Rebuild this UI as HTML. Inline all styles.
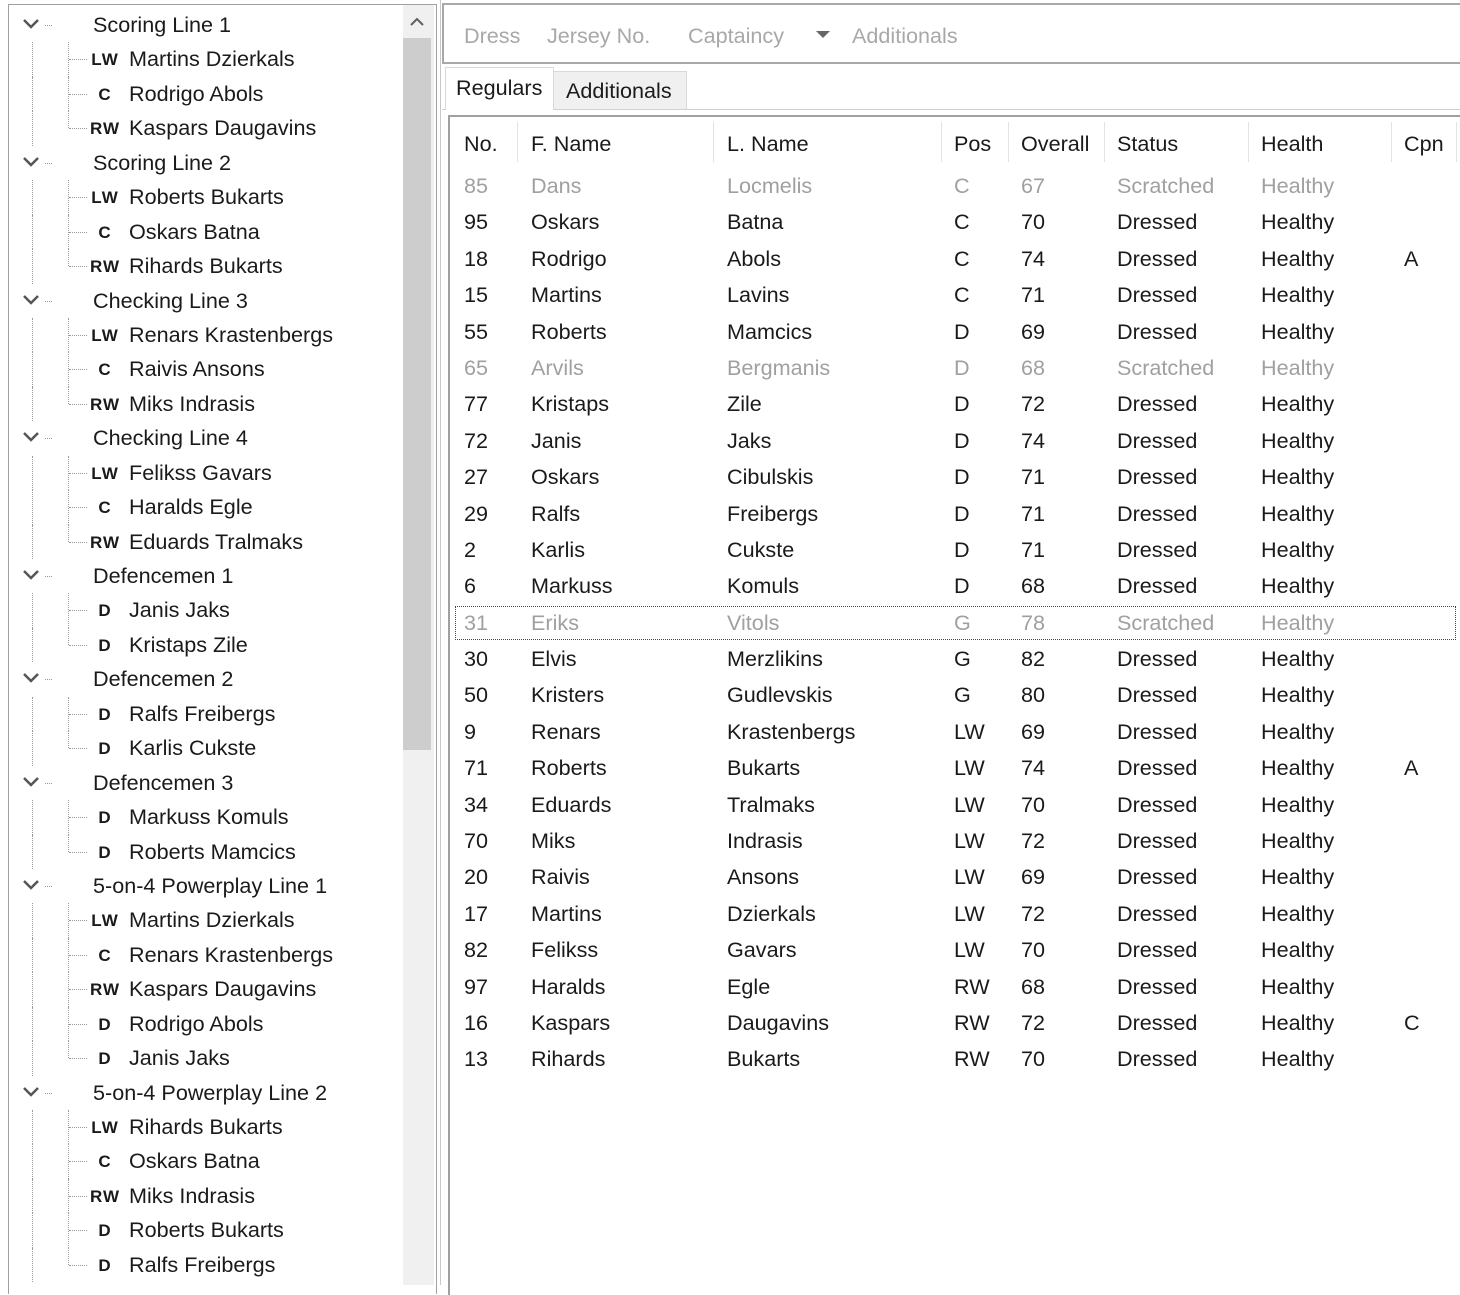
<!DOCTYPE html>
<html><head><meta charset="utf-8"><style>
*{margin:0;padding:0;box-sizing:border-box}
body{width:1460px;height:1285px;background:#fff;position:relative;overflow:hidden;font-family:"Liberation Sans",sans-serif;color:#1a1a1a}
.abs{position:absolute}
#tree{position:absolute;left:8px;top:8px;width:395px}
.r{position:relative;height:34.45px;font-size:21.6px;line-height:34px;white-space:nowrap}
.g .t{position:absolute;left:85px;top:0}
.g svg{position:absolute;left:14px;top:10px}
.g .dd{position:absolute;left:37px;top:17px;width:7px;border-top:1px dotted #999}
.c .vl{position:absolute;left:24px;top:0;height:100%;border-left:1px dotted #999}
.c .v2{position:absolute;left:60px;top:0;height:100%;border-left:1px dotted #999}
.c.last .v2{height:17px}
.c .h{position:absolute;left:61px;top:17px;width:20px;border-top:1px dotted #999}
.c .p{position:absolute;left:79px;width:36px;text-align:center;font-weight:900;font-size:17px;letter-spacing:1px;top:1px;background:#fff}
.c .n{position:absolute;left:121px;top:0}
#tbl{position:absolute;left:450px;top:168px;width:1010px}
.tr{position:relative;height:36.4px;font-size:21.6px;line-height:36px;white-space:nowrap}
.tr span{position:absolute;top:0}
.s{color:#a0a0a0}
.a{left:14px}.b{left:81px}.cc{left:277px}.d{left:504px}.e{left:571px}.f{left:667px}.g2{left:811px}.h2{left:954px}
.sel{outline:1px dotted #444;outline-offset:-2px}
.hd{position:absolute;top:129px;font-size:21.6px;line-height:30px}
.sep{position:absolute;top:122px;height:40px;border-left:1px solid #e3e3e3}
</style></head><body>
<div class="abs" style="left:8px;top:4px;width:429px;height:1290px;border:1px solid #a0a0a0;border-bottom:none"></div>
<div class="abs" style="left:403px;top:5px;width:31px;height:1280px;background:#f0f0f0"></div>
<div class="abs" style="left:403px;top:38px;width:28px;height:712px;background:#cdcdcd"></div>
<svg class="abs" style="left:409px;top:16px" width="16" height="12"><path d="M2 9 L8 3 L14 9" stroke="#606060" stroke-width="2" fill="none"/></svg>
<div class="abs" style="left:440px;top:0;width:1px;height:1285px;background:#c8c8c8"></div>

<div id="tree">
<div class="r g"><svg width="18" height="12"><path d="M2 2 L9 9 L16 2" stroke="#555" stroke-width="2.5" fill="none"/></svg><div class="dd"></div><span class="t">Scoring Line 1</span></div>
<div class="r c"><div class="vl"></div><div class="v2"></div><div class="h"></div><span class="p">LW</span><span class="n">Martins Dzierkals</span></div>
<div class="r c"><div class="vl"></div><div class="v2"></div><div class="h"></div><span class="p">C</span><span class="n">Rodrigo Abols</span></div>
<div class="r c last"><div class="vl"></div><div class="v2"></div><div class="h"></div><span class="p">RW</span><span class="n">Kaspars Daugavins</span></div>
<div class="r g"><svg width="18" height="12"><path d="M2 2 L9 9 L16 2" stroke="#555" stroke-width="2.5" fill="none"/></svg><div class="dd"></div><span class="t">Scoring Line 2</span></div>
<div class="r c"><div class="vl"></div><div class="v2"></div><div class="h"></div><span class="p">LW</span><span class="n">Roberts Bukarts</span></div>
<div class="r c"><div class="vl"></div><div class="v2"></div><div class="h"></div><span class="p">C</span><span class="n">Oskars Batna</span></div>
<div class="r c last"><div class="vl"></div><div class="v2"></div><div class="h"></div><span class="p">RW</span><span class="n">Rihards Bukarts</span></div>
<div class="r g"><svg width="18" height="12"><path d="M2 2 L9 9 L16 2" stroke="#555" stroke-width="2.5" fill="none"/></svg><div class="dd"></div><span class="t">Checking Line 3</span></div>
<div class="r c"><div class="vl"></div><div class="v2"></div><div class="h"></div><span class="p">LW</span><span class="n">Renars Krastenbergs</span></div>
<div class="r c"><div class="vl"></div><div class="v2"></div><div class="h"></div><span class="p">C</span><span class="n">Raivis Ansons</span></div>
<div class="r c last"><div class="vl"></div><div class="v2"></div><div class="h"></div><span class="p">RW</span><span class="n">Miks Indrasis</span></div>
<div class="r g"><svg width="18" height="12"><path d="M2 2 L9 9 L16 2" stroke="#555" stroke-width="2.5" fill="none"/></svg><div class="dd"></div><span class="t">Checking Line 4</span></div>
<div class="r c"><div class="vl"></div><div class="v2"></div><div class="h"></div><span class="p">LW</span><span class="n">Felikss Gavars</span></div>
<div class="r c"><div class="vl"></div><div class="v2"></div><div class="h"></div><span class="p">C</span><span class="n">Haralds Egle</span></div>
<div class="r c last"><div class="vl"></div><div class="v2"></div><div class="h"></div><span class="p">RW</span><span class="n">Eduards Tralmaks</span></div>
<div class="r g"><svg width="18" height="12"><path d="M2 2 L9 9 L16 2" stroke="#555" stroke-width="2.5" fill="none"/></svg><div class="dd"></div><span class="t">Defencemen 1</span></div>
<div class="r c"><div class="vl"></div><div class="v2"></div><div class="h"></div><span class="p">D</span><span class="n">Janis Jaks</span></div>
<div class="r c last"><div class="vl"></div><div class="v2"></div><div class="h"></div><span class="p">D</span><span class="n">Kristaps Zile</span></div>
<div class="r g"><svg width="18" height="12"><path d="M2 2 L9 9 L16 2" stroke="#555" stroke-width="2.5" fill="none"/></svg><div class="dd"></div><span class="t">Defencemen 2</span></div>
<div class="r c"><div class="vl"></div><div class="v2"></div><div class="h"></div><span class="p">D</span><span class="n">Ralfs Freibergs</span></div>
<div class="r c last"><div class="vl"></div><div class="v2"></div><div class="h"></div><span class="p">D</span><span class="n">Karlis Cukste</span></div>
<div class="r g"><svg width="18" height="12"><path d="M2 2 L9 9 L16 2" stroke="#555" stroke-width="2.5" fill="none"/></svg><div class="dd"></div><span class="t">Defencemen 3</span></div>
<div class="r c"><div class="vl"></div><div class="v2"></div><div class="h"></div><span class="p">D</span><span class="n">Markuss Komuls</span></div>
<div class="r c last"><div class="vl"></div><div class="v2"></div><div class="h"></div><span class="p">D</span><span class="n">Roberts Mamcics</span></div>
<div class="r g"><svg width="18" height="12"><path d="M2 2 L9 9 L16 2" stroke="#555" stroke-width="2.5" fill="none"/></svg><div class="dd"></div><span class="t">5-on-4 Powerplay Line 1</span></div>
<div class="r c"><div class="vl"></div><div class="v2"></div><div class="h"></div><span class="p">LW</span><span class="n">Martins Dzierkals</span></div>
<div class="r c"><div class="vl"></div><div class="v2"></div><div class="h"></div><span class="p">C</span><span class="n">Renars Krastenbergs</span></div>
<div class="r c"><div class="vl"></div><div class="v2"></div><div class="h"></div><span class="p">RW</span><span class="n">Kaspars Daugavins</span></div>
<div class="r c"><div class="vl"></div><div class="v2"></div><div class="h"></div><span class="p">D</span><span class="n">Rodrigo Abols</span></div>
<div class="r c last"><div class="vl"></div><div class="v2"></div><div class="h"></div><span class="p">D</span><span class="n">Janis Jaks</span></div>
<div class="r g"><svg width="18" height="12"><path d="M2 2 L9 9 L16 2" stroke="#555" stroke-width="2.5" fill="none"/></svg><div class="dd"></div><span class="t">5-on-4 Powerplay Line 2</span></div>
<div class="r c"><div class="vl"></div><div class="v2"></div><div class="h"></div><span class="p">LW</span><span class="n">Rihards Bukarts</span></div>
<div class="r c"><div class="vl"></div><div class="v2"></div><div class="h"></div><span class="p">C</span><span class="n">Oskars Batna</span></div>
<div class="r c"><div class="vl"></div><div class="v2"></div><div class="h"></div><span class="p">RW</span><span class="n">Miks Indrasis</span></div>
<div class="r c"><div class="vl"></div><div class="v2"></div><div class="h"></div><span class="p">D</span><span class="n">Roberts Bukarts</span></div>
<div class="r c last"><div class="vl"></div><div class="v2"></div><div class="h"></div><span class="p">D</span><span class="n">Ralfs Freibergs</span></div>
</div>

<div class="abs" style="left:442px;top:3px;width:1030px;height:61px;border:1px solid #a8a8a8;border-width:2px 0 2px 2px"></div>
<div class="abs" style="left:464px;top:21px;font-size:21.6px;line-height:30px;color:#a8a8a8;white-space:nowrap">Dress</div>
<div class="abs" style="left:547px;top:21px;font-size:21.6px;line-height:30px;color:#a8a8a8;white-space:nowrap">Jersey No.</div>
<div class="abs" style="left:688px;top:21px;font-size:21.6px;line-height:30px;color:#a8a8a8;white-space:nowrap">Captaincy</div>
<svg class="abs" style="left:815px;top:30px" width="16" height="10"><path d="M1 1 L15 1 L8 8 Z" fill="#666"/></svg>
<div class="abs" style="left:852px;top:21px;font-size:21.6px;line-height:30px;color:#a8a8a8;white-space:nowrap">Additionals</div>

<div class="abs" style="left:442px;top:109px;width:1030px;height:1px;background:#d0d0d0"></div>
<div class="abs" style="left:553px;top:71px;width:134px;height:38px;background:#f0f0f0;border:1px solid #d9d9d9;border-bottom:none"></div>
<div class="abs" style="left:445px;top:67px;width:109px;height:43px;background:#fff;border:1px solid #d9d9d9;border-bottom:none"></div>
<div class="abs" style="left:456px;top:73px;font-size:21.6px;line-height:30px">Regulars</div>
<div class="abs" style="left:566px;top:76px;font-size:21.6px;line-height:30px">Additionals</div>

<div class="abs" style="left:448px;top:115px;width:1030px;height:1180px;border:2px solid #a0a0a0;border-right:none;border-bottom:none"></div>
<div class="sep" style="left:517px"></div><div class="sep" style="left:713px"></div><div class="sep" style="left:941px"></div><div class="sep" style="left:1008px"></div><div class="sep" style="left:1104px"></div><div class="sep" style="left:1248px"></div><div class="sep" style="left:1391px"></div><div class="sep" style="left:1456px"></div>
<div class="hd" style="left:464px">No.</div><div class="hd" style="left:531px">F. Name</div><div class="hd" style="left:727px">L. Name</div><div class="hd" style="left:954px">Pos</div><div class="hd" style="left:1021px">Overall</div><div class="hd" style="left:1117px">Status</div><div class="hd" style="left:1261px">Health</div><div class="hd" style="left:1404px">Cpn</div>

<div id="tbl">
<div class="tr s"><span class="a">85</span><span class="b">Dans</span><span class="cc">Locmelis</span><span class="d">C</span><span class="e">67</span><span class="f">Scratched</span><span class="g2">Healthy</span></div>
<div class="tr"><span class="a">95</span><span class="b">Oskars</span><span class="cc">Batna</span><span class="d">C</span><span class="e">70</span><span class="f">Dressed</span><span class="g2">Healthy</span></div>
<div class="tr"><span class="a">18</span><span class="b">Rodrigo</span><span class="cc">Abols</span><span class="d">C</span><span class="e">74</span><span class="f">Dressed</span><span class="g2">Healthy</span><span class="h2">A</span></div>
<div class="tr"><span class="a">15</span><span class="b">Martins</span><span class="cc">Lavins</span><span class="d">C</span><span class="e">71</span><span class="f">Dressed</span><span class="g2">Healthy</span></div>
<div class="tr"><span class="a">55</span><span class="b">Roberts</span><span class="cc">Mamcics</span><span class="d">D</span><span class="e">69</span><span class="f">Dressed</span><span class="g2">Healthy</span></div>
<div class="tr s"><span class="a">65</span><span class="b">Arvils</span><span class="cc">Bergmanis</span><span class="d">D</span><span class="e">68</span><span class="f">Scratched</span><span class="g2">Healthy</span></div>
<div class="tr"><span class="a">77</span><span class="b">Kristaps</span><span class="cc">Zile</span><span class="d">D</span><span class="e">72</span><span class="f">Dressed</span><span class="g2">Healthy</span></div>
<div class="tr"><span class="a">72</span><span class="b">Janis</span><span class="cc">Jaks</span><span class="d">D</span><span class="e">74</span><span class="f">Dressed</span><span class="g2">Healthy</span></div>
<div class="tr"><span class="a">27</span><span class="b">Oskars</span><span class="cc">Cibulskis</span><span class="d">D</span><span class="e">71</span><span class="f">Dressed</span><span class="g2">Healthy</span></div>
<div class="tr"><span class="a">29</span><span class="b">Ralfs</span><span class="cc">Freibergs</span><span class="d">D</span><span class="e">71</span><span class="f">Dressed</span><span class="g2">Healthy</span></div>
<div class="tr"><span class="a">2</span><span class="b">Karlis</span><span class="cc">Cukste</span><span class="d">D</span><span class="e">71</span><span class="f">Dressed</span><span class="g2">Healthy</span></div>
<div class="tr"><span class="a">6</span><span class="b">Markuss</span><span class="cc">Komuls</span><span class="d">D</span><span class="e">68</span><span class="f">Dressed</span><span class="g2">Healthy</span></div>
<div class="tr s sel" style="margin-left:4px;width:1003px"><span class="a" style="left:10px">31</span><span class="b" style="left:77px">Eriks</span><span class="cc" style="left:273px">Vitols</span><span class="d" style="left:500px">G</span><span class="e" style="left:567px">78</span><span class="f" style="left:663px">Scratched</span><span class="g2" style="left:807px">Healthy</span></div>
<div class="tr"><span class="a">30</span><span class="b">Elvis</span><span class="cc">Merzlikins</span><span class="d">G</span><span class="e">82</span><span class="f">Dressed</span><span class="g2">Healthy</span></div>
<div class="tr"><span class="a">50</span><span class="b">Kristers</span><span class="cc">Gudlevskis</span><span class="d">G</span><span class="e">80</span><span class="f">Dressed</span><span class="g2">Healthy</span></div>
<div class="tr"><span class="a">9</span><span class="b">Renars</span><span class="cc">Krastenbergs</span><span class="d">LW</span><span class="e">69</span><span class="f">Dressed</span><span class="g2">Healthy</span></div>
<div class="tr"><span class="a">71</span><span class="b">Roberts</span><span class="cc">Bukarts</span><span class="d">LW</span><span class="e">74</span><span class="f">Dressed</span><span class="g2">Healthy</span><span class="h2">A</span></div>
<div class="tr"><span class="a">34</span><span class="b">Eduards</span><span class="cc">Tralmaks</span><span class="d">LW</span><span class="e">70</span><span class="f">Dressed</span><span class="g2">Healthy</span></div>
<div class="tr"><span class="a">70</span><span class="b">Miks</span><span class="cc">Indrasis</span><span class="d">LW</span><span class="e">72</span><span class="f">Dressed</span><span class="g2">Healthy</span></div>
<div class="tr"><span class="a">20</span><span class="b">Raivis</span><span class="cc">Ansons</span><span class="d">LW</span><span class="e">69</span><span class="f">Dressed</span><span class="g2">Healthy</span></div>
<div class="tr"><span class="a">17</span><span class="b">Martins</span><span class="cc">Dzierkals</span><span class="d">LW</span><span class="e">72</span><span class="f">Dressed</span><span class="g2">Healthy</span></div>
<div class="tr"><span class="a">82</span><span class="b">Felikss</span><span class="cc">Gavars</span><span class="d">LW</span><span class="e">70</span><span class="f">Dressed</span><span class="g2">Healthy</span></div>
<div class="tr"><span class="a">97</span><span class="b">Haralds</span><span class="cc">Egle</span><span class="d">RW</span><span class="e">68</span><span class="f">Dressed</span><span class="g2">Healthy</span></div>
<div class="tr"><span class="a">16</span><span class="b">Kaspars</span><span class="cc">Daugavins</span><span class="d">RW</span><span class="e">72</span><span class="f">Dressed</span><span class="g2">Healthy</span><span class="h2">C</span></div>
<div class="tr"><span class="a">13</span><span class="b">Rihards</span><span class="cc">Bukarts</span><span class="d">RW</span><span class="e">70</span><span class="f">Dressed</span><span class="g2">Healthy</span></div>
</div>
</body></html>
